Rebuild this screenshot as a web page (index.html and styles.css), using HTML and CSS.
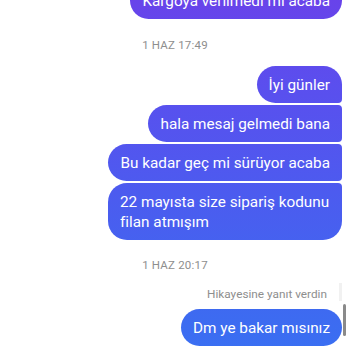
FILE: index.html
```html
<!DOCTYPE html>
<html lang="tr">
<head>
<meta charset="utf-8">
<link rel="stylesheet" href="styles.css">
</head>
<body>
<div class="thread">
  <div class="bubble last top-cut">Kargoya verilmedi mi acaba</div>
  <div class="stamp stamp-1">1 HAZ 17:49</div>
  <div class="group">
    <div class="bubble first">İyi günler</div>
    <div class="bubble mid">hala mesaj gelmedi bana</div>
    <div class="bubble mid">Bu kadar geç mi sürüyor acaba</div>
    <div class="bubble last wrap">22 mayısta size sipariş kodunu filan atmışım</div>
  </div>
  <div class="stamp stamp-2">1 HAZ 20:17</div>
  <div class="reply">
    <div class="reply-label">Hikayesine yanıt verdin</div>
    <div class="reply-row">
      <div class="bubble single">Dm ye bakar mısınız</div>
    </div>
    <span class="thumb-edge"></span>
    <span class="quote-line"></span>
  </div>
</div>
</body>
</html>
```
FILE: styles.css
```css
html, body {
  margin: 0;
  padding: 0;
  background: #ffffff;
  overflow: hidden;
}
body {
  width: 350px;
  height: 350px;
  font-family: "Roboto", "Liberation Sans", sans-serif;
}
.thread {
  display: flex;
  flex-direction: column;
  align-items: flex-end;
  padding: 0 8px;
  margin-top: -18px;
}
.bubble {
  box-sizing: border-box;
  color: #ffffff;
  font-size: 15.3px;
  line-height: 20px;
  padding: 8.5px 12px;
  background: linear-gradient(180deg, #6843ea 0%, #5a4fee 25%, #4c5bef 55%, #3f68f0 85%, #3a6ff2 100%);
  background-attachment: fixed;
  border-radius: 19px;
}
.top-cut {
  border-radius: 19px 4px 19px 19px;
}
.group {
  display: flex;
  flex-direction: column;
  align-items: flex-end;
  gap: 2px;
}
.first { border-radius: 19px 19px 4px 19px; }
.mid { border-radius: 19px 4px 4px 19px; }
.last { border-radius: 19px 4px 19px 19px; }
.wrap { width: 234px; }
.stamp {
  align-self: center;
  font-size: 11.5px;
  line-height: 14px;
  color: #8e8e8e;
  letter-spacing: 0.2px;
}
.stamp-1 { margin: 19px 0 14px; }
.stamp-2 { margin: 18px 0 15px; }
.reply {
  position: relative;
  display: flex;
  flex-direction: column;
  align-items: flex-end;
}
.reply-label {
  font-size: 11.8px;
  line-height: 14px;
  color: #8e8e8e;
  margin-right: 15px;
}
.reply-row {
  margin-top: 8px;
}
.thumb-edge {
  position: absolute;
  right: 0;
  top: -4px;
  width: 3px;
  height: 18px;
  background: #f1f1f1;
}
.quote-line {
  position: absolute;
  right: -4px;
  top: 17px;
  width: 3px;
  height: 32px;
  background: #8a8a8a;
  border-radius: 2px;
}
```
